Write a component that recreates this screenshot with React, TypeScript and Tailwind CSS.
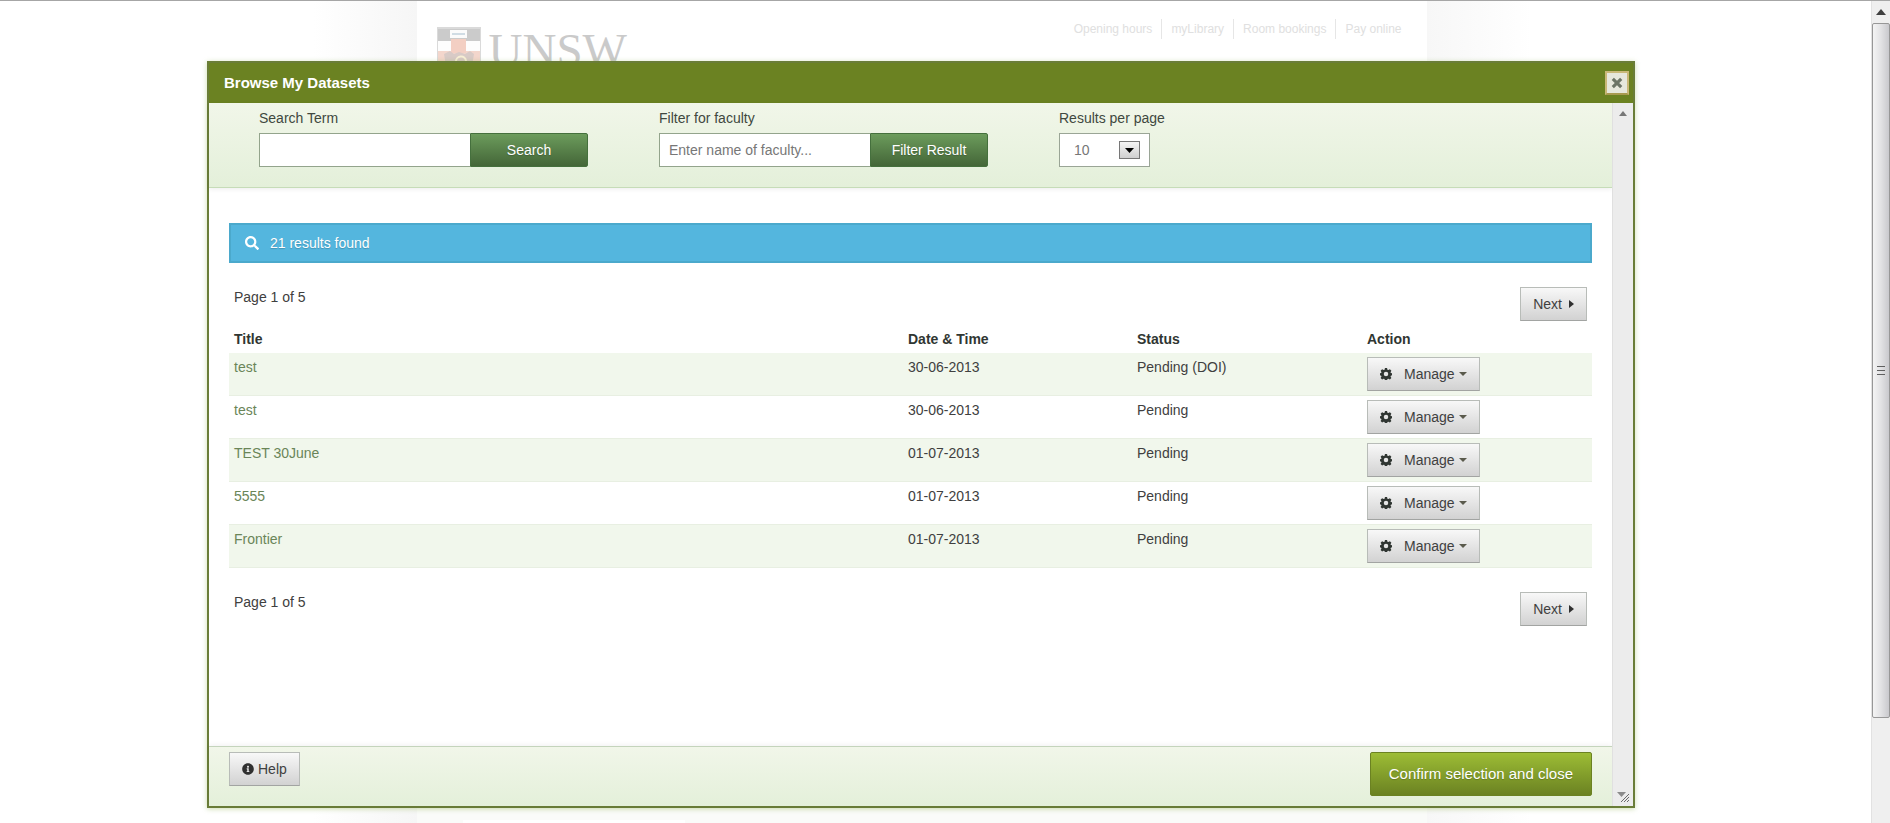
import { useState, type ReactNode } from "react";
import { FaInfoCircle, FaSearch } from "react-icons/fa";

const rows = [
  { title: "test", date: "30-06-2013", status: "Pending (DOI)" },
  { title: "test", date: "30-06-2013", status: "Pending" },
  { title: "TEST 30June", date: "01-07-2013", status: "Pending" },
  { title: "5555", date: "01-07-2013", status: "Pending" },
  { title: "Frontier", date: "01-07-2013", status: "Pending" },
];

const greyButton =
  "flex h-[34px] items-center border border-[#b8bcb8] border-b-[#a2a4a2] bg-linear-to-b from-[#f8f8f8] to-[#d2d2d2] text-[#404040]";
const greenButton =
  "w-[118px] rounded-r-xs border border-[#45703d] bg-linear-to-b from-[#6c9c5c] to-[#446638] text-white text-shadow-xs";
const cell = "border-b border-[#e8efe2] px-[5px]";

function GearIcon() {
  return (
    <svg viewBox="0 0 16 16" className="size-3 fill-[#303632]" aria-hidden="true">
      <path
        fillRule="evenodd"
        d="M6.600 0h2.800l.5 2.300 1.300.5 2-1.200 2 2-1.200 2 .5 1.200 2.300.4v2.400l-2.300.6-.5 1.200 1.200 2-2 2-2-1.200-1.300.5-.5 2.300H6.600l-.5-2.300-1.300-.5-2 1.200-2-2 1.200-2-.5-1.200L-.5 9.600V7.200l2-.4.5-1.200-1.200-2 2-2 2 1.200 1.300-.5zM8 5a3 3 0 1 0 0 6 3 3 0 0 0 0-6z"
      />
    </svg>
  );
}

function Crest() {
  return (
    <svg viewBox="0 0 44 50" className="h-[50px] w-11" aria-hidden="true">
      <path d="M0 0h44v50H0z" fill="#dadada" />
      <path d="M1 2h42v12H1z" fill="#cbcbcb" />
      <path d="M1 14h42v10H1z" fill="#fdfdfd" />
      <path d="M1 24h42v25H1z" fill="#f3d6cc" />
      <path d="M14 12h15v14H14z" fill="#f3cfc3" />
      <path d="M13 3h17v8H13z" fill="#fbfbfb" />
      <path d="M15 7h13" stroke="#c2d2dc" strokeWidth="1.5" />
      <path d="M7 27l6-3 4 3 5-2 6 2 5-3 4 3-2 12H9z" fill="#d8cac6" />
      <path d="M19 35a5 5 0 0 1 10-1" fill="none" stroke="#f8efd5" strokeWidth="2" />
    </svg>
  );
}

function FieldColumn({ id, label, children }: { id: string; label: string; children: ReactNode }) {
  return (
    <div className="w-[400px]">
      <label htmlFor={id} className="mb-[5px] block">
        {label}
      </label>
      <div className="flex">{children}</div>
    </div>
  );
}

function Pager() {
  return (
    <div className="flex justify-between px-[5px]">
      <span>Page 1 of 5</span>
      <button type="button" className={`${greyButton} gap-[7px] px-3`}>
        Next
        <svg viewBox="0 0 5 8" className="h-2 w-[5px] fill-[#303030]" aria-hidden="true">
          <path d="M0 0l5 4-5 4z" />
        </svg>
      </button>
    </div>
  );
}

function PageBehind() {
  return (
    <div className="flex h-full justify-center pr-7">
      <div className="w-[104px] bg-linear-to-r from-white to-[#f6f6f6]" />
      <div className="flex w-[1010px] flex-col justify-between">
        <header className="flex justify-between pt-[18px] pr-4 pl-5">
          <div className="flex items-start gap-2 pt-2">
            <Crest />
            <span className="font-['Liberation_Serif',serif] text-[47px] leading-[46px] text-[#cacaca]">UNSW</span>
          </div>
          <nav className="flex h-5 divide-x divide-[#e6e6e6] text-xs leading-5">
            {["Opening hours", "myLibrary", "Room bookings", "Pay online"].map((item) => (
              <a key={item} href="#" className="px-[9px] text-[#e0e0e0]">
                {item}
              </a>
            ))}
          </nav>
        </header>
        <div className="flex h-[15px] bg-[#fafbf9] pl-[46px]">
          <div className="mt-3 h-[3px] w-[222px] bg-white" />
        </div>
      </div>
      <div className="w-[104px] bg-linear-to-r from-[#f7f7f7] to-white" />
    </div>
  );
}

function WindowScrollbar() {
  return (
    <div className="flex w-[19px] flex-col border-l border-[#e2e2e2] bg-[#efefef]" aria-hidden="true">
      <div className="flex h-[22px] items-center justify-center">
        <svg viewBox="0 0 10 6" className="h-1.5 w-2.5 fill-[#404040]">
          <path d="M5 0l5 6H0z" />
        </svg>
      </div>
      <div className="flex h-[84.5%] flex-col items-center justify-center gap-[3px] rounded-xs border border-[#979797] bg-linear-to-r from-[#f4f4f4] via-[#e2e2e4] to-[#c9c9cd]">
        <span className="h-px w-2 bg-[#606060]" />
        <span className="h-px w-2 bg-[#606060]" />
        <span className="h-px w-2 bg-[#606060]" />
      </div>
    </div>
  );
}

function DialogScrollbar() {
  return (
    <div className="flex w-[21px] flex-col items-center justify-between border-l border-[#e0e0e0] bg-[#ececec] pt-2 pb-1" aria-hidden="true">
      <svg viewBox="0 0 8 5" className="h-[5px] w-2 fill-[#777]">
        <path d="M4 0l4 5H0z" />
      </svg>
      <svg viewBox="0 0 12 11" className="h-[11px] w-3">
        <path d="M0 1h9L4.500 6z" fill="#8c8c8c" />
        <path d="M4 11l8-8M7 11l5-5M10 11l2-2" stroke="#6a6a6a" fill="none" />
      </svg>
    </div>
  );
}

export default function App() {
  const [term, setTerm] = useState("");
  const [faculty, setFaculty] = useState("");

  return (
    <div className="relative flex h-screen border-t border-[#a6a6a6] bg-white font-['Liberation_Sans',Arial,sans-serif] text-sm text-[#404040]">
      <div className="min-w-0 flex-1 overflow-hidden">
        <PageBehind />
      </div>
      <WindowScrollbar />

      <div className="absolute inset-y-0 right-5 left-0 flex justify-center pt-[60px] pr-7 pb-[15px]">
        <section
          role="dialog"
          aria-labelledby="dialog-title"
          className="flex w-full max-w-[1428px] flex-col border-2 border-[#6a7d38] bg-white shadow-[0_1px_5px_rgba(130,170,60,0.4)]"
        >
          <header className="flex h-10 shrink-0 items-center justify-between bg-[#6b8222] pr-1 pl-[15px]">
            <h1 id="dialog-title" className="text-[15px] font-bold text-white">
              Browse My Datasets
            </h1>
            <button
              type="button"
              aria-label="Close"
              className="flex size-6 items-center justify-center border-2 border-[#c9b878] border-b-[#a89a50] bg-[#e6e7dc]"
            >
              <svg viewBox="0 0 10 10" className="size-3 stroke-[#6c7466]" aria-hidden="true">
                <path d="M1.500 1.500l7 7M8.500 1.500l-7 7" strokeWidth="2.600" />
              </svg>
            </button>
          </header>

          <div className="flex min-h-0 flex-1">
            <div className="flex min-w-0 flex-1 flex-col">
              <form className="flex h-[85px] shrink-0 border-b border-[#c6dcb8] bg-linear-to-b from-[#f1f6e9] to-[#e4f0da] pt-[5px] pl-[50px] text-[#404840] shadow-[0_1px_5px_rgba(0,0,0,0.08)]">
                <FieldColumn id="term" label="Search Term">
                  <input
                    id="term"
                    value={term}
                    onChange={(e) => setTerm(e.target.value)}
                    className="h-[34px] w-[211px] border border-r-0 border-[#93a48c] bg-white px-[9px]"
                  />
                  <button type="button" className={greenButton}>
                    Search
                  </button>
                </FieldColumn>
                <FieldColumn id="faculty" label="Filter for faculty">
                  <input
                    id="faculty"
                    value={faculty}
                    placeholder="Enter name of faculty..."
                    onChange={(e) => setFaculty(e.target.value)}
                    className="h-[34px] w-[211px] border border-r-0 border-[#93a48c] bg-white px-[9px] placeholder:text-[#777]"
                  />
                  <button type="button" className={greenButton}>
                    Filter Result
                  </button>
                </FieldColumn>
                <FieldColumn id="per-page" label="Results per page">
                  <div className="relative">
                    <select
                      id="per-page"
                      defaultValue="10"
                      className="h-[34px] w-[91px] appearance-none border border-[#9aa596] bg-white pl-[14px] text-[#777]"
                    >
                      <option>10</option>
                      <option>20</option>
                      <option>50</option>
                    </select>
                    <span className="pointer-events-none absolute top-2 right-2.5 flex h-[18px] w-[21px] items-center justify-center border border-[#777] bg-linear-to-b from-[#f4f4f4] to-[#cfcfcf]">
                      <svg viewBox="0 0 9 5" className="h-[5px] w-[9px] fill-black" aria-hidden="true">
                        <path d="M0 0h9L4.500 5z" />
                      </svg>
                    </span>
                  </div>
                </FieldColumn>
              </form>

              <main className="flex-1 px-5 pt-[35px]">
                <div className="flex h-10 items-center gap-[11px] border-2 border-[#4ba9cc] bg-[#54b6de] pl-[14px] text-white text-shadow-xs">
                  <FaSearch className="size-[14px]" aria-hidden="true" />
                  21 results found
                </div>

                <div className="pt-6">
                  <Pager />
                </div>

                <table className="mt-1 mb-6 w-full table-fixed border-separate border-spacing-0 text-left">
                  <thead>
                    <tr className="h-7 text-[#303632]">
                      <th className="px-[5px]">Title</th>
                      <th className="w-[229px] px-[5px]">Date &amp; Time</th>
                      <th className="w-[230px] px-[5px]">Status</th>
                      <th className="w-[230px] px-[5px]">Action</th>
                    </tr>
                  </thead>
                  <tbody>
                    {rows.map((row, i) => (
                      <tr key={i} className="h-[43px] align-top odd:bg-[#f1f7ec]">
                        <td className={`${cell} pt-1`}>
                          <a href="#" className="text-[#6a8558]">
                            {row.title}
                          </a>
                        </td>
                        <td className={`${cell} pt-1`}>{row.date}</td>
                        <td className={`${cell} pt-1`}>{row.status}</td>
                        <td className={`${cell} py-1`}>
                          <button type="button" className={`${greyButton} w-[113px] pl-3`}>
                            <GearIcon />
                            <span className="pl-3">Manage</span>
                            <svg viewBox="0 0 8 4" className="ml-1 h-1 w-2 fill-[#5a5a4c]" aria-hidden="true">
                              <path d="M0 0h8L4 4z" />
                            </svg>
                          </button>
                        </td>
                      </tr>
                    ))}
                  </tbody>
                </table>

                <Pager />
              </main>

              <footer className="flex h-[60px] shrink-0 items-start justify-between border-t border-[#c4d4bc] bg-linear-to-b from-[#f1f6e9] to-[#e4f0da] px-5 pt-[5px] shadow-[0_-1px_5px_rgba(0,0,0,0.06)]">
                <button type="button" className={`${greyButton} gap-1 px-3`}>
                  <FaInfoCircle className="size-3 text-[#303030]" aria-hidden="true" />
                  Help
                </button>
                <button
                  type="button"
                  className="h-11 rounded-xs border border-[#6b8222] bg-linear-to-b from-[#9dbd35] to-[#6b8222] px-[18px] text-[15px] text-white text-shadow-xs"
                >
                  Confirm selection and close
                </button>
              </footer>
            </div>
            <DialogScrollbar />
          </div>
        </section>
      </div>
    </div>
  );
}
